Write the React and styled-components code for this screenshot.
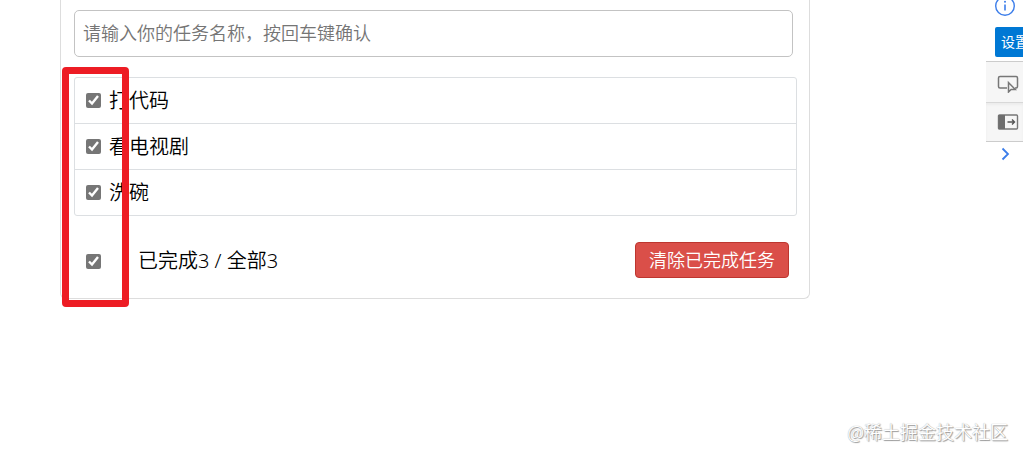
import { useState } from 'react'
import styled, { createGlobalStyle } from 'styled-components'

const GlobalStyle = createGlobalStyle`
  * {
    box-sizing: border-box;
  }
  body {
    margin: 0;
    background: #fff;
    color: #000;
    font-family: "Noto Sans", "Noto Sans CJK SC", sans-serif;
    overflow: hidden;
  }
`

const Page = styled.div`
  position: relative;
  display: flex;
  align-items: flex-start;
  min-height: 100vh;
  overflow: hidden;
`

const Card = styled.main`
  position: relative;
  flex: 1;
  margin: 0 176px 0 60px;
  padding: 10px 12px 20px 13px;
  border: 1px solid #ddd;
  border-top: 0;
  border-radius: 0 0 6px 6px;
`

const TaskInput = styled.input`
  display: block;
  width: calc(100% - 4px);
  height: 47px;
  padding: 0 8px 2px;
  border: 1px solid #c3c3c3;
  border-radius: 5px;
  outline: none;
  font-family: inherit;
  font-size: 18px;

  &::placeholder {
    color: #757575;
    font-weight: 350;
  }
`

const List = styled.ul`
  list-style: none;
  margin: 20px 0 0;
  padding: 0;
  border: 1px solid #dcdfe2;
  border-radius: 3px;
`

const Item = styled.li`
  height: 46px;
  padding-left: 11px;
  border-bottom: 1px solid #dcdfe2;

  &:last-child {
    height: 45px;
    border-bottom: 0;
  }

  label {
    display: flex;
    align-items: center;
    gap: 8px;
    height: 45px;
    font-size: 20px;
    font-weight: 350;
    line-height: 28px;
  }
`

const Checkbox = styled.input`
  width: 15px;
  height: 15px;
  margin: 0;
  flex: none;
  accent-color: #767676;
`

const Footer = styled.footer`
  display: flex;
  align-items: center;
  justify-content: space-between;
  margin-top: 26px;
  padding: 0 8px 0 12px;

  label {
    display: flex;
    align-items: center;
    gap: 37px;
    padding-top: 2px;
    font-size: 20px;
    font-weight: 350;
    line-height: 28px;
  }
`

const ClearButton = styled.button`
  height: 36px;
  padding: 0 13px;
  border: 1px solid #bd362f;
  border-radius: 4px;
  background: #da4f49;
  color: #fff;
  font-family: inherit;
  font-size: 18px;
  font-weight: 350;
  line-height: 28px;
  cursor: pointer;
`

const Highlight = styled.div`
  position: absolute;
  top: 67px;
  left: 1px;
  bottom: -9px;
  width: 67px;
  border: 7px solid #ed1c24;
  border-radius: 4px;
  pointer-events: none;
`

const Sidebar = styled.aside`
  flex: none;
  width: 37px;
  overflow: hidden;
`

const InfoIcon = styled.svg`
  display: block;
  margin: -5px 0 10px 8px;
`

const SettingButton = styled.button`
  display: block;
  width: 60px;
  height: 30px;
  margin: 0 0 4px 9px;
  padding: 0 0 2px 6px;
  border: 0;
  border-radius: 2px;
  background: #0078d4;
  color: #fff;
  font-family: inherit;
  font-size: 14px;
  text-align: left;
`

const ToolButton = styled.button`
  display: flex;
  align-items: center;
  width: 100%;
  height: 41px;
  padding: 0 0 0 11px;
  border: 0;
  border-top: 1px solid #ccc;
  background: #f6f6f6;

  & + & {
    height: 40px;
    border-top-color: #d8d8d8;
    border-bottom: 1px solid #ccc;
    box-shadow: inset 0 2px 2px #ececec;
  }

  svg {
    flex: none;
  }
`

const MoreButton = styled.button`
  display: block;
  margin: 5px 0 0 13px;
  padding: 0;
  border: 0;
  background: none;

  svg {
    display: block;
  }
`

const Watermark = styled.div`
  position: absolute;
  right: 15px;
  bottom: 13px;
  color: #fff;
  font-family: "Noto Sans CJK SC", sans-serif;
  font-size: 18px;
  font-weight: 350;
  line-height: 28px;
  text-shadow: 0 0 1px #999, 1px 1px 1px #999;
`

const App = () => {
  const [tasks, setTasks] = useState([
    { id: 1, name: '打代码', done: true },
    { id: 2, name: '看电视剧', done: true },
    { id: 3, name: '洗碗', done: true },
  ])

  const doneCount = tasks.filter((t) => t.done).length

  const addTask = (e) => {
    const name = e.target.value.trim()
    if (e.key !== 'Enter' || !name) return
    setTasks([{ id: Date.now(), name, done: false }, ...tasks])
    e.target.value = ''
  }

  const toggle = (id) =>
    setTasks(tasks.map((t) => (t.id === id ? { ...t, done: !t.done } : t)))

  const toggleAll = (e) =>
    setTasks(tasks.map((t) => ({ ...t, done: e.target.checked })))

  return (
    <Page>
      <GlobalStyle />
      <Card>
        <TaskInput
          type="text"
          aria-label="任务名称"
          placeholder="请输入你的任务名称，按回车键确认"
          onKeyUp={addTask}
        />
        <List>
          {tasks.map((task) => (
            <Item key={task.id}>
              <label>
                <Checkbox
                  type="checkbox"
                  checked={task.done}
                  onChange={() => toggle(task.id)}
                />
                <span>{task.name}</span>
              </label>
            </Item>
          ))}
        </List>
        <Footer>
          <label>
            <Checkbox
              type="checkbox"
              checked={tasks.length > 0 && doneCount === tasks.length}
              onChange={toggleAll}
            />
            <span>{`已完成${doneCount} / 全部${tasks.length}`}</span>
          </label>
          <ClearButton onClick={() => setTasks(tasks.filter((t) => !t.done))}>
            清除已完成任务
          </ClearButton>
        </Footer>
        <Highlight />
      </Card>

      <Sidebar>
        <InfoIcon width="22" height="22" viewBox="0 0 22 22" fill="none" stroke="#3b7dea">
          <circle cx="11" cy="11" r="9.3" strokeWidth="1.4" />
          <path d="M11 9.5v6" strokeWidth="1.6" />
          <circle cx="11" cy="6.8" r="1" fill="#3b7dea" stroke="none" />
        </InfoIcon>
        <SettingButton>设置</SettingButton>
        <ToolButton aria-label="select element">
          <svg width="22" height="22" viewBox="0 0 22 22" fill="none" stroke="#777" strokeWidth="1.5">
            <path d="M10 17H3a1.500 1.500 0 0 1-1.500-1.500V7A1.500 1.500 0 0 1 3 5.500h16A1.500 1.500 0 0 1 20.500 7v8.500A1.500 1.500 0 0 1 19 17h-1" />
            <path d="M11.500 11.500v9.500l2.600-2.500h4.200z" fill="#f6f6f6" />
          </svg>
        </ToolButton>
        <ToolButton aria-label="toggle panel">
          <svg width="22" height="18" viewBox="0 0 22 18" fill="none" stroke="#777" strokeWidth="1.4">
            <rect x="1.500" y="2" width="19" height="14" rx="1" />
            <path d="M1.500 2h6.500v14H1.500z" fill="#6e6e6e" stroke="none" />
            <path d="M10.500 9h7M15 6.500 17.500 9 15 11.500" stroke="#555" />
          </svg>
        </ToolButton>
        <MoreButton aria-label="more">
          <svg width="12" height="14" viewBox="0 0 12 14" fill="none" stroke="#3b7dea" strokeWidth="1.8">
            <path d="M3.500 1.500 9 7 3.500 12.500" />
          </svg>
        </MoreButton>
      </Sidebar>

      <Watermark>@稀土掘金技术社区</Watermark>
    </Page>
  )
}

export default App
